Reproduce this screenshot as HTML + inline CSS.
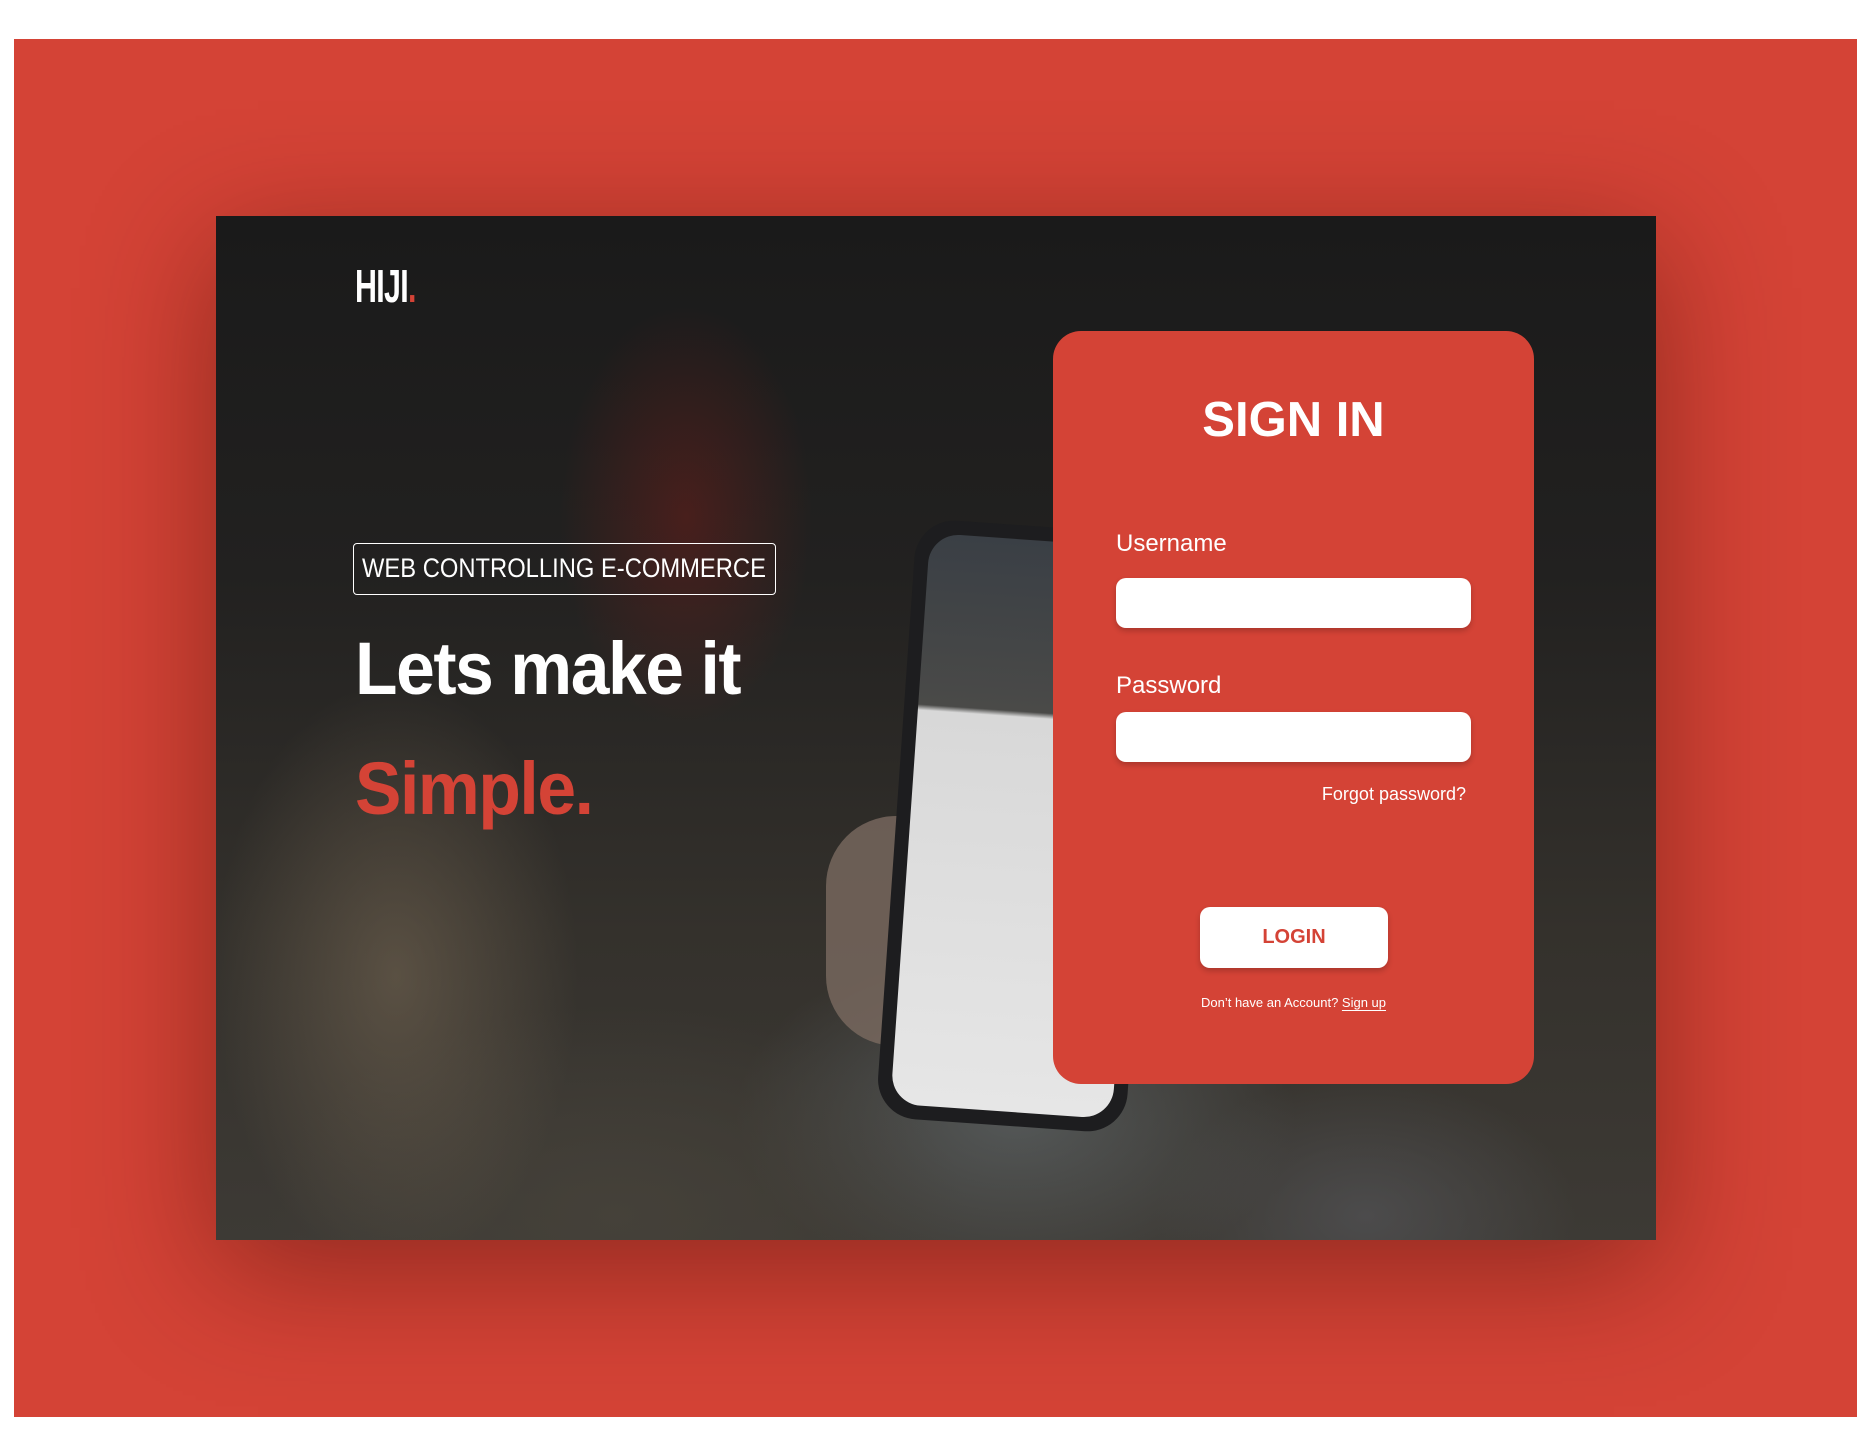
<!DOCTYPE html>
<html><head><meta charset="utf-8"><style>
*{margin:0;padding:0;box-sizing:border-box}
body{width:1872px;height:1456px;background:#fff;position:relative;overflow:hidden;font-family:"Liberation Sans",Roboto,sans-serif}
.bg{position:absolute;left:14px;top:39px;width:1843px;height:1378px;background:#d44336}
.card{position:absolute;left:216px;top:216px;width:1440px;height:1024px;overflow:hidden;
background:
radial-gradient(ellipse 260px 420px at 180px 760px,rgba(120,105,85,.55),transparent 70%),
radial-gradient(ellipse 500px 300px at 400px 1000px,rgba(70,66,58,.9),transparent 70%),
radial-gradient(ellipse 180px 300px at 470px 300px,rgba(120,30,25,.45),transparent 70%),
radial-gradient(ellipse 400px 250px at 800px 900px,rgba(110,120,125,.5),transparent 70%),
radial-gradient(ellipse 300px 200px at 1150px 1000px,rgba(80,80,82,.8),transparent 70%),
linear-gradient(180deg,#1a1a1a 0%,#222120 35%,#34312c 70%,#3d3a35 100%);
box-shadow:0 30px 120px rgba(60,10,5,.45)}
.phone{position:absolute;left:680px;top:310px;width:250px;height:600px;border-radius:40px;background:#1d1d1f;transform:rotate(4deg)}
.screen{position:absolute;left:14px;top:14px;right:14px;bottom:14px;border-radius:30px;background:linear-gradient(180deg,#3a3f45 0%,#4a4a48 30%,#d8d8d8 31%,#e6e6e6 100%)}
.hand{position:absolute;left:610px;top:600px;width:140px;height:230px;border-radius:70px;background:#7a6a60;opacity:.8}
.logo{position:absolute;left:355px;top:259px;color:#fff;font-weight:bold;font-size:46px;letter-spacing:-1px;transform:scaleX(.66);transform-origin:left top;font-family:"Liberation Sans Narrow","Liberation Sans",sans-serif}
.logo span{color:#d44336}
.tag{position:absolute;left:353px;top:543px;width:423px;height:52px;border:1.5px solid #fff;border-radius:4px;color:#fff;overflow:hidden}
.tag span{position:absolute;left:8px;top:0;font-size:27px;line-height:49px;white-space:nowrap;transform:scaleX(.88);transform-origin:left center}
.h1{position:absolute;left:355px;top:626px;color:#fff;font-weight:bold;font-size:74px;letter-spacing:-1.5px;white-space:nowrap;transform:scaleX(.94);transform-origin:left top}
.h2{position:absolute;left:355px;top:746px;color:#d44336;font-weight:bold;font-size:74px;letter-spacing:-1.5px;transform:scaleX(.94);transform-origin:left top}
.panel{position:absolute;left:1053px;top:331px;width:481px;height:753px;background:#d44336;border-radius:28px}
.si{position:absolute;left:0;width:100%;top:61px;text-align:center;color:#fff;font-weight:bold;font-size:49px}
.lbl{position:absolute;left:63px;color:#fff;font-size:24px}
.in{position:absolute;left:63px;width:355px;height:50px;background:#fff;border-radius:10px;box-shadow:0 3px 6px rgba(0,0,0,.2)}
.fp{position:absolute;right:68px;top:453px;color:#fff;font-size:18px}
.btn{position:absolute;left:147px;top:576px;width:188px;height:61px;background:#fff;border-radius:10px;color:#d44336;font-weight:bold;font-size:20px;text-align:center;line-height:61px;box-shadow:0 3px 6px rgba(0,0,0,.2)}
.su{position:absolute;left:0;width:100%;top:664px;text-align:center;color:#fff;font-size:13px}
.su u{text-underline-offset:3px}
</style></head><body>
<div class="bg"></div>
<div class="card">
 <div class="hand"></div>
 <div class="phone"><div class="screen"></div></div>
</div>
<div class="logo">HIJI<span>.</span></div>
<div class="tag"><span>WEB CONTROLLING E-COMMERCE</span></div>
<div class="h1">Lets make it</div>
<div class="h2">Simple.</div>
<div class="panel">
 <div class="si">SIGN IN</div>
 <div class="lbl" style="top:199px">Username</div>
 <div class="in" style="top:247px"></div>
 <div class="lbl" style="top:341px">Password</div>
 <div class="in" style="top:381px"></div>
 <div class="fp">Forgot password?</div>
 <div class="btn">LOGIN</div>
 <div class="su">Don’t have an Account? <u>Sign up</u></div>
</div>
</body></html>
